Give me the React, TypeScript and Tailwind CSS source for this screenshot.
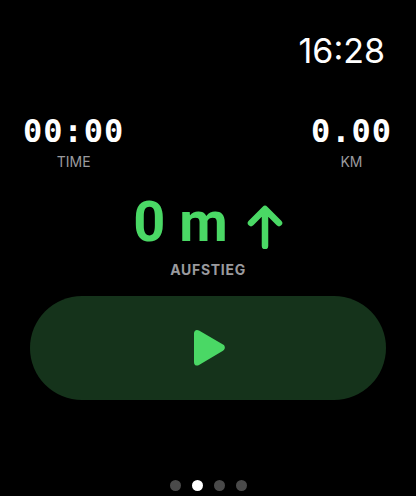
import React from "react";

const green = "#4ad865";

const Stat = ({ value, label }: { value: string; label: string }) => (
  <div className="flex flex-col items-center">
    <div className="font-['DejaVu_Sans_Mono',monospace] font-bold text-[32px] leading-none tracking-[1px] text-white">
      {value}
    </div>
    <div className="mt-[8px] font-['Inter',sans-serif] text-[14px] leading-none text-[#9a9a9e]">{label}</div>
  </div>
);

const ArrowUp = () => (
  <svg width="36" height="44" viewBox="0 0 36 44" fill="none">
    <path d="M18 41 V5 M4 18 L18 4 L32 18" stroke={green} strokeWidth="6.5" strokeLinecap="round" strokeLinejoin="round" />
  </svg>
);

const Play = () => (
  <svg width="36" height="40" viewBox="0 0 36 40">
    <path
      d="M3 5.5 C3 2.5 5.5 1.2 8 2.6 L32 16.6 C34.5 18 34.5 21.4 32 22.8 L8 37 C5.5 38.4 3 37.2 3 34.2 Z"
      fill={green}
    />
  </svg>
);

export default function App() {
  return (
    <div className="w-[416px] h-[496px] bg-black overflow-hidden flex flex-col font-['Inter',sans-serif]">
      <div className="flex justify-end pr-[31px] pt-[34px]">
        <span className="text-white text-[34px] leading-none font-normal">16:28</span>
      </div>

      <div className="flex justify-between pl-[23px] pr-[24px] mt-[47px]">
        <Stat value="00:00" label="TIME" />
        <Stat value="0.00" label="KM" />
      </div>

      <div className="flex flex-col items-center mt-[25px]">
        <div className="flex items-end gap-[19px]">
          <span className="font-['Roboto',sans-serif] font-bold text-[56px] leading-none" style={{ color: green }}>
            0 m
          </span>
          <div className="mb-[1px]">
            <ArrowUp />
          </div>
        </div>
        <div className="mt-[13px] text-[14px] leading-none font-bold tracking-[0.7px] text-[#9a9a9e]">AUFSTIEG</div>
      </div>

      <div className="mx-[30px] mt-[19px] h-[104px] rounded-full bg-[#15331b] flex items-center justify-center">
        <div className="pl-[2px]">
          <Play />
        </div>
      </div>

      <div className="flex justify-center gap-[11px] mt-[80px]">
        <div className="w-[11px] h-[11px] rounded-full bg-[#4a4a4a]" />
        <div className="w-[11px] h-[11px] rounded-full bg-white" />
        <div className="w-[11px] h-[11px] rounded-full bg-[#4a4a4a]" />
        <div className="w-[11px] h-[11px] rounded-full bg-[#4a4a4a]" />
      </div>
    </div>
  );
}
